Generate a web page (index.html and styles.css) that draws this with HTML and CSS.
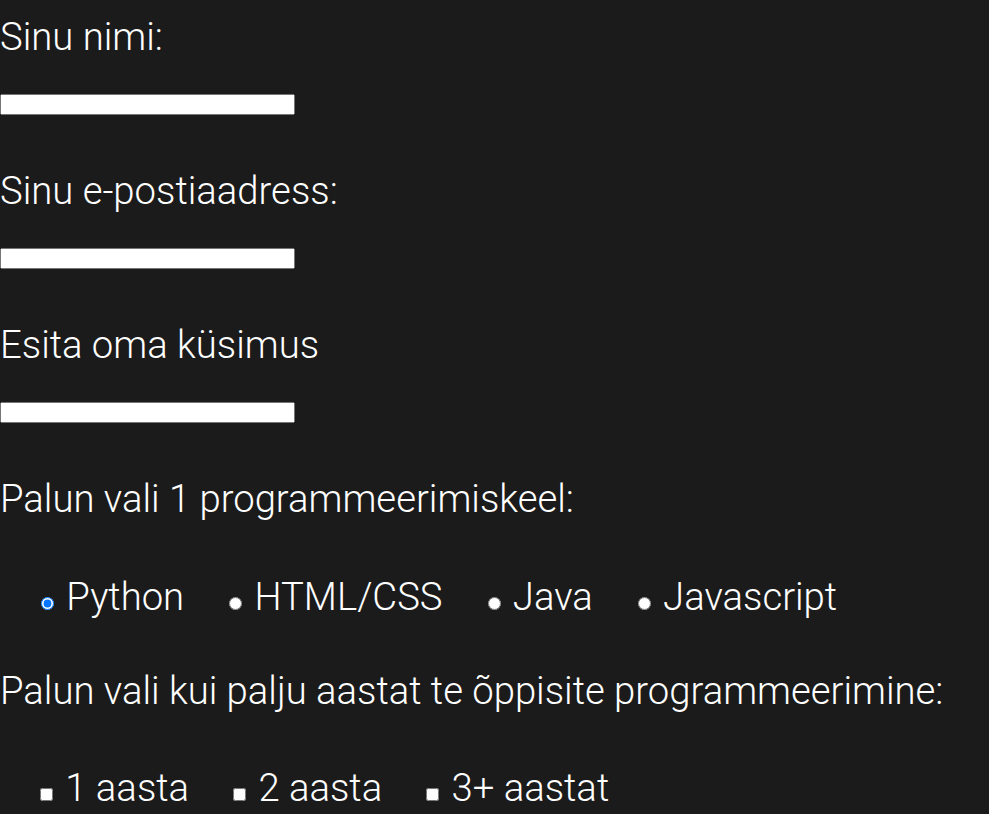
FILE: index.html
```html
<!DOCTYPE html>
<html lang="et">
<head>
<meta charset="utf-8">
<title>Küsimustik</title>
<link rel="stylesheet" href="styles.css">
</head>
<body>
<form class="form">
  <label class="field-label" for="nimi">Sinu nimi:</label>
  <input class="text-input" type="text" id="nimi" name="nimi">

  <label class="field-label" for="email">Sinu e-postiaadress:</label>
  <input class="text-input" type="text" id="email" name="email">

  <label class="field-label" for="kysimus">Esita oma küsimus</label>
  <input class="text-input" type="text" id="kysimus" name="kysimus">

  <p class="field-label">Palun vali 1 programmeerimiskeel:</p>
  <div class="options">
    <span class="option"><input type="radio" name="keel" id="py" checked> <label for="py">Python</label></span>
    <span class="option"><input type="radio" name="keel" id="html"> <label for="html">HTML/CSS</label></span>
    <span class="option"><input type="radio" name="keel" id="java"> <label for="java">Java</label></span>
    <span class="option"><input type="radio" name="keel" id="js"> <label for="js">Javascript</label></span>
  </div>

  <p class="field-label">Palun vali kui palju aastat te õppisite programmeerimine:</p>
  <div class="options options-last">
    <span class="option"><input type="checkbox" id="a1"> <label for="a1">1 aasta</label></span>
    <span class="option"><input type="checkbox" id="a2"> <label for="a2">2 aasta</label></span>
    <span class="option"><input type="checkbox" id="a3"> <label for="a3">3+ aastat</label></span>
  </div>
</form>
</body>
</html>
```
FILE: styles.css
```css
html, body {
  margin: 0;
  padding: 0;
  background: #1b1b1b;
}
body {
  color: #ffffff;
  font-family: Roboto, "Noto Sans", sans-serif;
  font-weight: 300;
  font-size: 38.25px;
}
.form {
  display: flex;
  flex-direction: column;
  align-items: flex-start;
  padding-top: 14px;
}
.field-label {
  display: block;
  margin: 0;
  line-height: 46px;
}
.text-input {
  width: 295px;
  height: 21px;
  box-sizing: border-box;
  margin: 34px 0 53px 0;
  font-size: 13px;
}
.options {
  display: flex;
  align-items: baseline;
  padding-left: 36px;
  margin: 52px 0 48px 0;
  line-height: 46px;
}
.options-last {
  margin-bottom: 0;
  line-height: 44px;
}
.option {
  margin-right: 40px;
  white-space: nowrap;
}
.option input {
  margin-top: 0;
}
```
